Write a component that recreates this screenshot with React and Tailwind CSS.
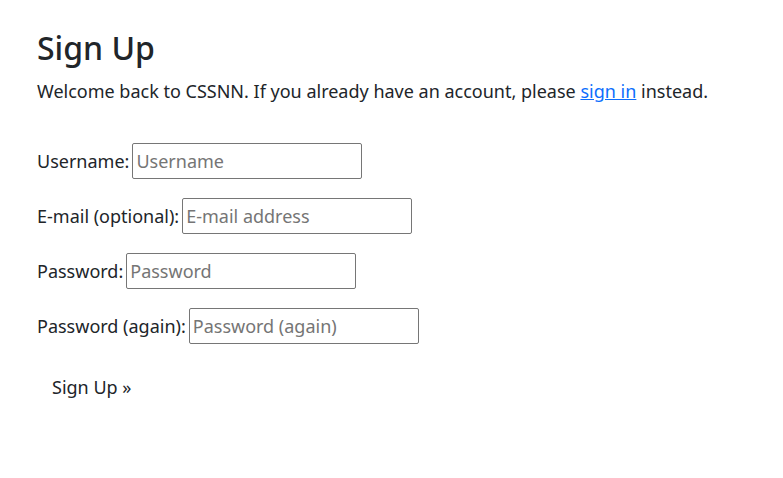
export default function App() {
  const rows = [
    ["Username:", "Username"],
    ["E-mail (optional):", "E-mail address"],
    ["Password:", "Password"],
    ["Password (again):", "Password (again)"],
  ];
  return (
    <div className="min-h-[478px] bg-white px-[37px] pt-[29px] text-[#212529]" style={{ fontFamily: '"Noto Sans", sans-serif' }}>
      <h1 className="text-[32px] font-medium leading-[1.2] mb-[11px]">Sign Up</h1>
      <p className="text-[18px] leading-[1.5] mb-[38px]">
        Welcome back to CSSNN. If you already have an account, please{" "}
        <a href="#" className="text-[#0d6efd] underline">sign in</a> instead.
      </p>
      <form className="flex flex-col gap-[19px] text-[18px]">
        {rows.map(([l, p]) => (
          <div key={l} className="flex items-center gap-[3px]">
            <label>{l}</label>
            <input
              placeholder={p}
              className="w-[230px] h-[36px] border border-[#767676] rounded-[2px] px-[3px] text-[18px] placeholder:text-[#757575]"
            />
          </div>
        ))}
        <div>
          <button type="button" className="px-[15px] py-[6px] mt-[5px] text-[18px]">Sign Up »</button>
        </div>
      </form>
    </div>
  );
}
